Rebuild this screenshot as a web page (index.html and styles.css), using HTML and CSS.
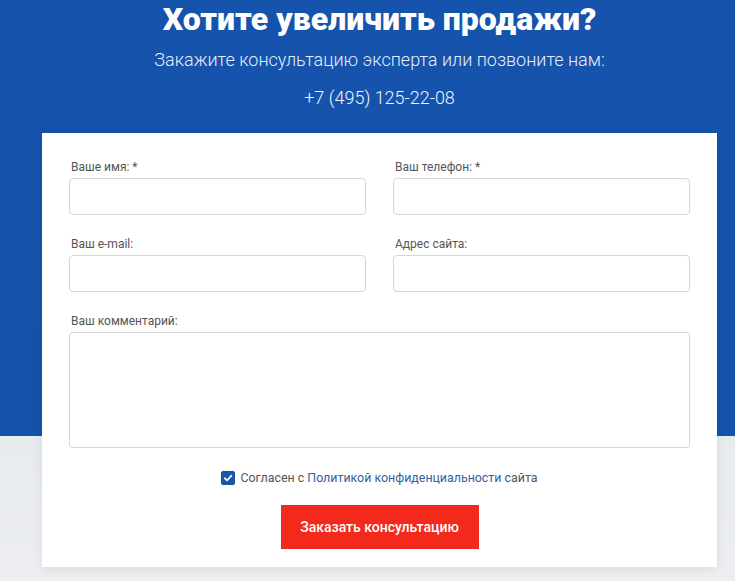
FILE: index.html
```html
<!DOCTYPE html>
<html lang="ru">
<head>
<meta charset="utf-8">
<title>Хотите увеличить продажи?</title>
<link rel="stylesheet" href="styles.css">
</head>
<body>
<div class="page">
  <div class="wrap">
    <header class="head">
      <h1 class="title">Хотите увеличить продажи?</h1>
      <p class="sub">Закажите консультацию эксперта или позвоните нам:</p>
      <p class="phone">+7 (495) 125-22-08</p>
    </header>
    <form class="card">
      <div class="grid">
        <label class="field">
          <span class="label">Ваше имя: *</span>
          <span class="input"></span>
        </label>
        <label class="field">
          <span class="label">Ваш телефон: *</span>
          <span class="input"></span>
        </label>
        <label class="field">
          <span class="label">Ваш e-mail:</span>
          <span class="input"></span>
        </label>
        <label class="field">
          <span class="label">Адрес сайта:</span>
          <span class="input"></span>
        </label>
        <label class="field wide">
          <span class="label">Ваш комментарий:</span>
          <span class="input area"></span>
        </label>
      </div>
      <div class="agree">
        <span class="check"><svg width="10" height="10" viewBox="0 0 10 10"><path d="M1.6 5.2 L4 7.4 L8.5 2.6" fill="none" stroke="#fff" stroke-width="1.6" stroke-linecap="round" stroke-linejoin="round"/></svg></span>
        <span class="agree-text">Согласен с <span class="link">Политикой конфиденциальности</span> сайта</span>
      </div>
      <div class="actions">
        <span class="btn">Заказать консультацию</span>
      </div>
    </form>
  </div>
</div>
</body>
</html>
```

FILE: styles.css
```css
* { box-sizing: border-box; }
html, body { margin: 0; padding: 0; }
body {
  font-family: Roboto, "Liberation Sans", Arial, sans-serif;
  width: 735px;
  height: 581px;
  overflow: hidden;
}
.page {
  height: 581px;
  background: linear-gradient(to bottom, #1553ad 0, #1552ab 436px, #e8ebee 436px, #eceef1 581px);
}
.wrap {
  width: 675px;
  margin-left: 42px;
}
.head {
  text-align: center;
  color: #fff;
}
.title {
  margin: 0;
  font-size: 32px;
  line-height: 38px;
  font-weight: 900;
}
.sub {
  margin: 12px 0 0;
  font-size: 18px;
  line-height: 20px;
  font-weight: 300;
  color: #e6eefa;
}
.phone {
  margin: 18px 0 0;
  font-size: 18px;
  line-height: 20px;
  font-weight: 300;
  color: #eef3fb;
}
.card {
  margin-top: 25px;
  background: #fff;
  padding: 27px 27px 18px;
  box-shadow: 0 2px 10px rgba(0, 0, 0, 0.08);
}
.grid {
  display: grid;
  grid-template-columns: 297px 297px;
  column-gap: 27px;
  row-gap: 22px;
}
.field {
  display: flex;
  flex-direction: column;
  gap: 4px;
}
.wide { grid-column: 1 / 3; }
.label {
  font-size: 12px;
  line-height: 14px;
  color: #555;
  padding-left: 2px;
}
.input {
  display: block;
  height: 37px;
  border: 1px solid #d6d6d6;
  border-radius: 4px;
  background: #fff;
}
.area { height: 116px; }
.agree {
  margin-top: 22px;
  display: flex;
  justify-content: center;
  align-items: center;
  gap: 5px;
  height: 16px;
}
.check {
  width: 14px;
  height: 14px;
  border-radius: 2px;
  background: #1b55a8;
  display: flex;
  align-items: center;
  justify-content: center;
}
.agree-text {
  font-size: 12.4px;
  line-height: 14px;
  color: #555;
}
.link { color: #34619f; }
.actions {
  margin-top: 19px;
  display: flex;
  justify-content: center;
}
.btn {
  width: 198px;
  height: 44px;
  background: #f3291c;
  color: #fff;
  font-size: 14px;
  font-weight: 500;
  display: flex;
  align-items: center;
  justify-content: center;
}
```
